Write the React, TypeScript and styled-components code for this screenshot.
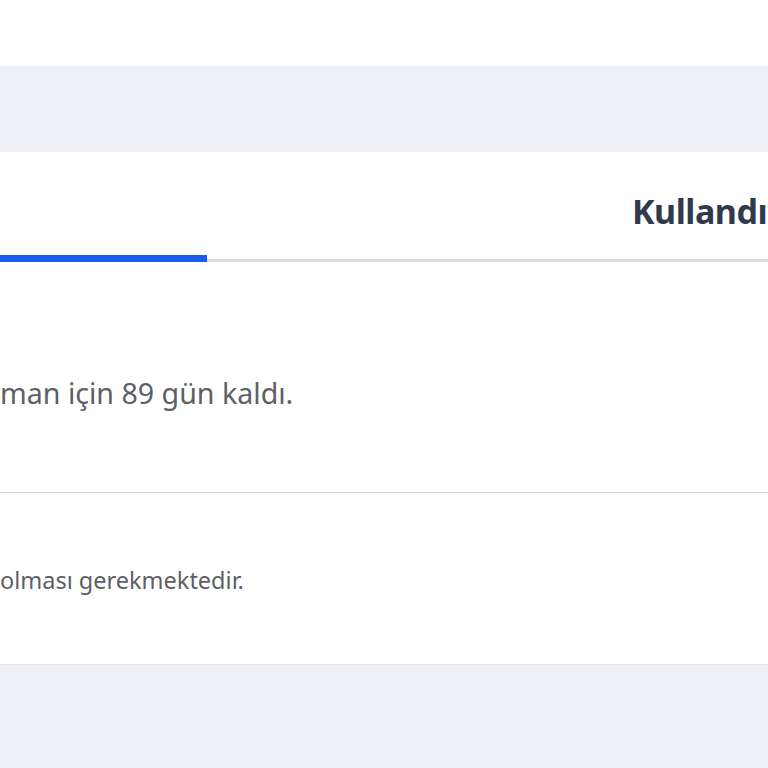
import React from "react";
import styled, { createGlobalStyle } from "styled-components";

const GlobalStyle = createGlobalStyle`
  html, body {
    margin: 0;
    padding: 0;
    background: #fff;
  }
  body {
    font-family: "Noto Sans", "Open Sans", sans-serif;
    overflow: hidden;
  }
`;

const App: React.FC = () => {
  return (
    <Page>
      <GlobalStyle />
      <TopSpace />
      <Band />
      <Card>
        <TabBar>
          <Tab active />
          <Tab>
            <TabLabel>Kullandı</TabLabel>
          </Tab>
        </TabBar>
        {/* remaining days */}
        <Notice>man için 89 gün kaldı.</Notice>
        <Divider />
        <Note>olması gerekmektedir.</Note>
      </Card>
      <Footer />
    </Page>
  );
};

const Page = styled.div`
  width: 768px;
  height: 768px;
  overflow: hidden;
  display: flex;
  flex-direction: column;
`;

const TopSpace = styled.div`
  height: 66px;
  background: #fff;
`;

const Band = styled.div`
  height: 86px;
  background: #eff0f5;
`;

const Card = styled.section`
  height: 512px;
  background: #fff;
  display: flex;
  flex-direction: column;
`;

const TabBar = styled.div`
  height: 110px;
  display: flex;
  align-items: stretch;
  box-sizing: border-box;
`;

const Tab = styled.div<{ active?: boolean }>`
  box-sizing: border-box;
  display: flex;
  align-items: center;
  white-space: nowrap;
  flex: ${(p) => (p.active ? "0 0 207px" : "1 1 auto")};
  border-bottom: ${(p) => (p.active ? "7px solid #1a5cf0" : "3px solid #dcdde0")};
  padding-left: ${(p) => (p.active ? "0" : "425px")};
  padding-top: ${(p) => (p.active ? "0" : "10px")};
`;

const TabLabel = styled.span`
  font-size: 34px;
  font-weight: 700;
  color: #2f3a4c;
  letter-spacing: -0.5px;
`;

const Notice = styled.p`
  margin: 113px 0 0;
  font-size: 28.6px;
  line-height: 36px;
  color: #5d5f65;
  white-space: nowrap;
`;

const Divider = styled.hr`
  margin: 81px 0 0;
  border: 0;
  border-top: 1px solid #cfd0d3;
`;

const Note = styled.p`
  margin: 72px 0 0;
  font-size: 23.5px;
  line-height: 30px;
  color: #5d5f65;
  white-space: nowrap;
`;

const Footer = styled.div`
  flex: 1;
  background: #eff0f5;
  border-top: 1px solid #e6e7eb;
`;

export default App;
